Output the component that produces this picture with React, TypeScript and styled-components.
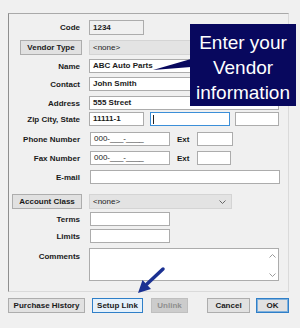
import React from 'react';
import styled, { createGlobalStyle } from 'styled-components';

const GlobalStyle = createGlobalStyle`
  html, body {
    margin: 0;
    padding: 0;
    background: #f0f0f0;
  }
  body {
    font-family: 'Liberation Sans', Arial, sans-serif;
    color: #1a1a1a;
  }
`;

const Screen = styled.div`
  position: relative;
  width: 300px;
  height: 328px;
  overflow: hidden;
  background: #f0f0f0;
  padding-top: 13px;
  box-sizing: border-box;
`;

const GroupBox = styled.div`
  margin-left: 8px;
  width: 281px;
  height: 279px;
  box-sizing: border-box;
  border: 1px solid #dadada;
  border-left-color: #8e8e8e;
  border-top-color: #a9a9a9;
  padding-top: 6px;
  display: flex;
  flex-direction: column;
`;

const Row = styled.div<{ mt?: number; top?: boolean }>`
  display: grid;
  grid-template-columns: 73px 1fr;
  column-gap: 7px;
  align-items: ${({ top }) => (top ? 'start' : 'center')};
  margin-top: ${({ mt }) => mt ?? 0}px;
`;

const Label = styled.div<{ pt?: number }>`
  text-align: right;
  padding-right: 2px;
  padding-top: ${({ pt }) => pt ?? 0}px;
  font-size: 8px;
  font-weight: bold;
  white-space: nowrap;
`;

const LabelBox = styled.div<{ w: number }>`
  justify-self: end;
  width: ${({ w }) => w}px;
  height: 15px;
  box-sizing: border-box;
  background: #e1e1e1;
  border: 1px solid #adadad;
  font-size: 8px;
  font-weight: bold;
  line-height: 13px;
  text-align: center;
  white-space: nowrap;
`;

const Line = styled.div`
  display: flex;
  align-items: center;
`;

const Field = styled.div<{
  w: number;
  h?: number;
  ml?: number;
  bold?: boolean;
  readOnly?: boolean;
  focused?: boolean;
}>`
  position: relative;
  width: ${({ w }) => w}px;
  height: ${({ h }) => h ?? 14}px;
  margin-left: ${({ ml }) => ml ?? 0}px;
  box-sizing: border-box;
  background: ${({ readOnly }) => (readOnly ? '#f0f0f0' : '#ffffff')};
  border: 1px solid ${({ focused }) => (focused ? '#3c8fd8' : '#acacac')};
  padding-left: 3px;
  font-size: 8px;
  line-height: ${({ h }) => (h ?? 14) - 2}px;
  font-weight: ${({ bold }) => (bold ? 'bold' : 'normal')};
  white-space: nowrap;
  overflow: hidden;
`;

const Caret = styled.span`
  position: absolute;
  left: 2px;
  top: 2px;
  width: 1px;
  height: 9px;
  background: #222;
`;

const Combo = styled.div<{ w: number }>`
  display: flex;
  align-items: center;
  justify-content: space-between;
  width: ${({ w }) => w}px;
  height: 15px;
  box-sizing: border-box;
  background: #e3e3e3;
  border: 1px solid #d4d4d4;
  padding: 0 5px 0 3px;
  font-size: 8px;
  color: #222;
`;

const ExtLabel = styled.div`
  width: 20px;
  padding-left: 7px;
  font-size: 8px;
  font-weight: bold;
`;

const TextArea = styled.div`
  display: flex;
  justify-content: flex-end;
  width: 190px;
  height: 33px;
  box-sizing: border-box;
  background: #fff;
  border: 1px solid #acacac;
`;

const ScrollBar = styled.div`
  display: flex;
  flex-direction: column;
  justify-content: space-between;
  align-items: center;
  width: 12px;
  padding: 5px 0 3px;
`;

const ButtonRow = styled.div`
  display: flex;
  padding-left: 8px;
  margin-top: 6px;
`;

const Button = styled.div<{
  w: number;
  ml?: number;
  variant?: 'normal' | 'hot' | 'disabled' | 'default';
}>`
  width: ${({ w }) => w}px;
  height: 15px;
  margin-left: ${({ ml }) => ml ?? 0}px;
  box-sizing: border-box;
  font-size: 8px;
  font-weight: bold;
  line-height: 13px;
  text-align: center;
  white-space: nowrap;
  background: ${({ variant }) =>
    variant === 'hot' ? '#e5f1fb' : variant === 'disabled' ? '#cccccc' : '#e1e1e1'};
  color: ${({ variant }) => (variant === 'disabled' ? '#8f8f8f' : '#1a1a1a')};
  border: 1px solid
    ${({ variant }) =>
      variant === 'hot' || variant === 'default'
        ? '#2f7fc8'
        : variant === 'disabled'
        ? '#bfbfbf'
        : '#adadad'};
  box-shadow: ${({ variant }) =>
    variant === 'default' ? 'inset 0 0 0 1px #7fb0dc' : 'none'};
`;

const Callout = styled.div`
  position: absolute;
  left: 190px;
  top: 24px;
  width: 106px;
  height: 82px;
  box-sizing: border-box;
  padding-top: 6px;
  background: #08085e;
  color: #ffffff;
  font-size: 19px;
  line-height: 25px;
  text-align: center;
`;

const Overlay = styled.svg`
  position: absolute;
  left: 0;
  top: 0;
  pointer-events: none;
`;

const Chevron: React.FC<{ up?: boolean; color?: string }> = ({ up, color = '#9a9a9a' }) => (
  <svg width="7" height="4" viewBox="0 0 7 4">
    <path
      d={up ? 'M0.5 3.5 L3.5 0.5 L6.5 3.5' : 'M0.5 0.5 L3.5 3.5 L6.5 0.5'}
      fill="none"
      stroke={color}
      strokeWidth="1"
    />
  </svg>
);

const App: React.FC = () => {
  return (
    <>
      <GlobalStyle />
      <Screen>
        <GroupBox>
          <Row>
            <Label>Code</Label>
            <Field w={55} h={15} bold readOnly>1234</Field>
          </Row>
          <Row mt={5}>
            <LabelBox w={62}>Vendor Type</LabelBox>
            <Combo w={143}>
              <span>&lt;none&gt;</span>
              <Chevron color="#666" />
            </Combo>
          </Row>
          <Row mt={4}>
            <Label>Name</Label>
            <Field w={190} bold>ABC Auto Parts</Field>
          </Row>
          <Row mt={4}>
            <Label>Contact</Label>
            <Field w={190} bold>John Smith</Field>
          </Row>
          <Row mt={5}>
            <Label>Address</Label>
            <Field w={190} bold>555 Street</Field>
          </Row>
          <Row mt={2}>
            <Label>Zip City, State</Label>
            <Line>
              <Field w={55} bold>11111-1</Field>
              <Field w={80} ml={6} focused>
                <Caret />
              </Field>
              <Field w={44} ml={5} />
            </Line>
          </Row>
          <Row mt={6}>
            <Label>Phone Number</Label>
            <Line>
              <Field w={80} ml={1}>000-___-____</Field>
              <ExtLabel>Ext</ExtLabel>
              <Field w={36} />
            </Line>
          </Row>
          <Row mt={5}>
            <Label>Fax Number</Label>
            <Line>
              <Field w={80} ml={1}>000-___-____</Field>
              <ExtLabel>Ext</ExtLabel>
              <Field w={34} />
            </Line>
          </Row>
          <Row mt={5}>
            <Label>E-mail</Label>
            <Field w={190} ml={1} />
          </Row>
          <Row mt={10}>
            <LabelBox w={70}>Account Class</LabelBox>
            <Combo w={143}>
              <span>&lt;none&gt;</span>
              <Chevron color="#666" />
            </Combo>
          </Row>
          <Row mt={3}>
            <Label>Terms</Label>
            <Field w={80} ml={1} />
          </Row>
          <Row mt={3}>
            <Label>Limits</Label>
            <Field w={80} ml={1} />
          </Row>
          <Row mt={5} top>
            <Label pt={4}>Comments</Label>
            <TextArea>
              <ScrollBar>
                <Chevron up />
                <Chevron />
              </ScrollBar>
            </TextArea>
          </Row>
        </GroupBox>
        <ButtonRow>
          <Button w={77}>Purchase History</Button>
          <Button w={51} ml={7} variant="hot">Setup Link</Button>
          <Button w={37} ml={8} variant="disabled">Unlink</Button>
          <Button w={43} ml={19}>Cancel</Button>
          <Button w={33} ml={6} variant="default">OK</Button>
        </ButtonRow>

        <Overlay width="300" height="328" viewBox="0 0 300 328">
          <polygon points="153,70 191,59 191,67" fill="#08085e" />
          <line x1="163" y1="269" x2="147" y2="284" stroke="#1b3192" strokeWidth="3.5" strokeLinecap="round" />
          <polygon points="138,293 142.5,280 151,289" fill="#1b3192" />
        </Overlay>
        <Callout>
          Enter your
          <br />
          Vendor
          <br />
          information
        </Callout>
      </Screen>
    </>
  );
};

export default App;
